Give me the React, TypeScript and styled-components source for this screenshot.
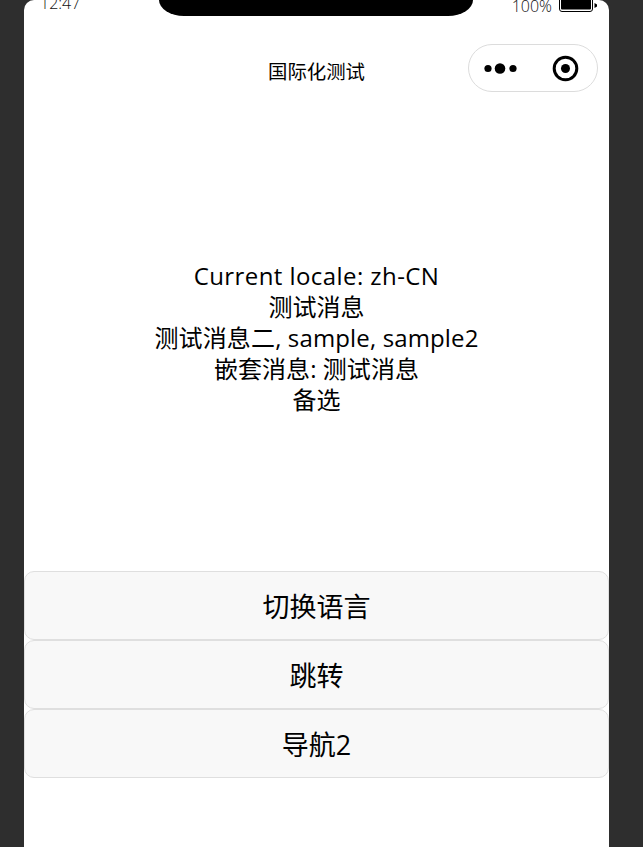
import React from 'react';
import styled, { createGlobalStyle } from 'styled-components';

const GlobalStyle = createGlobalStyle`
  html, body {
    margin: 0;
    padding: 0;
    height: 100%;
    background-color: #2e2e2e;
    overflow: hidden;
  }
  * {
    box-sizing: border-box;
  }
`;

const lines = [
  { text: 'Current locale: zh-CN', tracking: 0.43 },
  { text: '测试消息', tracking: 0 },
  { text: '测试消息二, sample, sample2', tracking: 0.14 },
  { text: '嵌套消息: 测试消息', tracking: 0.05 },
  { text: '备选', tracking: 0 },
];

const buttons = ['切换语言', '跳转', '导航2'];

export default function App() {
  return (
    <>
      <GlobalStyle />
      <Page>
        <Phone>
          <StatusBar>
            <Time>12:47</Time>
            <Notch />
            <Battery>
              <BatteryText>100%</BatteryText>
              <svg width="38" height="12" viewBox="0 0 38 12">
                <rect x="0.5" y="-3" width="33" height="14.5" rx="2.5" fill="#fff" stroke="#000" />
                <rect x="2" y="-3" width="30" height="12.5" rx="1" fill="#000" />
                <path d="M35.5 3 L38 4.5 V6.5 L35.5 8 Z" fill="#000" />
              </svg>
            </Battery>
          </StatusBar>
          <NavBar>
            <NavTitle>国际化测试</NavTitle>
            <Capsule>
              <svg width="33" height="11" viewBox="0 0 33 11">
                <circle cx="4" cy="5.5" r="3.6" fill="#000" />
                <circle cx="16" cy="5.5" r="5.3" fill="#000" />
                <circle cx="29" cy="5.5" r="3.6" fill="#000" />
              </svg>
              <svg width="27" height="27" viewBox="0 0 27 27">
                <circle cx="13.5" cy="13.5" r="11.3" fill="none" stroke="#000" strokeWidth="3" />
                <circle cx="13.5" cy="13.5" r="4.5" fill="#000" />
              </svg>
            </Capsule>
          </NavBar>
          <Messages>
            {lines.map((line) => (
              <Line key={line.text} $tracking={line.tracking}>
                {line.text}
              </Line>
            ))}
          </Messages>
          <Buttons>
            {buttons.map((label) => (
              <ActionButton key={label}>{label}</ActionButton>
            ))}
          </Buttons>
        </Phone>
      </Page>
    </>
  );
}

const Page = styled.div`
  height: 847px;
  padding: 0 34px 0 24px;
  background-color: #2e2e2e;
  font-family: "Open Sans", "Noto Sans CJK SC", sans-serif;
  color: #000;
`;

const Phone = styled.div`
  width: 585px;
  height: 847px;
  background-color: #fff;
  border-radius: 10px 10px 0 0;
  overflow: hidden;
`;

const StatusBar = styled.div`
  height: 16px;
  padding: 0 12px 0 16px;
  display: flex;
  align-items: flex-start;
`;

const Time = styled.span`
  width: 119px;
  margin-top: -8px;
  font-size: 16px;
  line-height: 22px;
  font-weight: 300;
  color: #111;
`;

const Notch = styled.div`
  width: 314px;
  height: 16px;
  background-color: #000;
  border-radius: 0 0 25px 25px / 0 0 16px 16px;
`;

const Battery = styled.span`
  margin-left: auto;
  display: flex;
  align-items: flex-start;
  gap: 7px;
`;

const BatteryText = styled.span`
  margin-top: -5px;
  font-size: 16px;
  line-height: 22px;
  font-weight: 300;
  color: #111;
`;

const NavBar = styled.div`
  height: 48px;
  margin-top: 28px;
  padding-right: 11px;
  display: flex;
  justify-content: flex-end;
  align-items: center;
  position: relative;
`;

const NavTitle = styled.span`
  position: absolute;
  left: 0;
  right: 0;
  top: 4px;
  text-align: center;
  font-size: 19.4px;
  line-height: 48px;
`;

const Capsule = styled.div`
  width: 130px;
  height: 48px;
  padding: 0 18.5px 0 15px;
  border: 1px solid #dcdcdc;
  border-radius: 24px;
  display: flex;
  justify-content: space-between;
  align-items: center;
`;

const Messages = styled.div`
  margin-top: 168px;
  height: 311px;
  display: flex;
  flex-direction: column;
  align-items: center;
`;

const Line = styled.div<{ $tracking: number }>`
  font-size: 24px;
  line-height: 31px;
  letter-spacing: ${(props) => props.$tracking}px;
  white-space: nowrap;
`;

const Buttons = styled.div`
  display: flex;
  flex-direction: column;
`;

const ActionButton = styled.div`
  height: 69px;
  display: flex;
  justify-content: center;
  align-items: center;
  background-color: #f8f8f8;
  border: 1px solid #dfdfdf;
  border-radius: 10px;
  font-size: 27px;
`;
